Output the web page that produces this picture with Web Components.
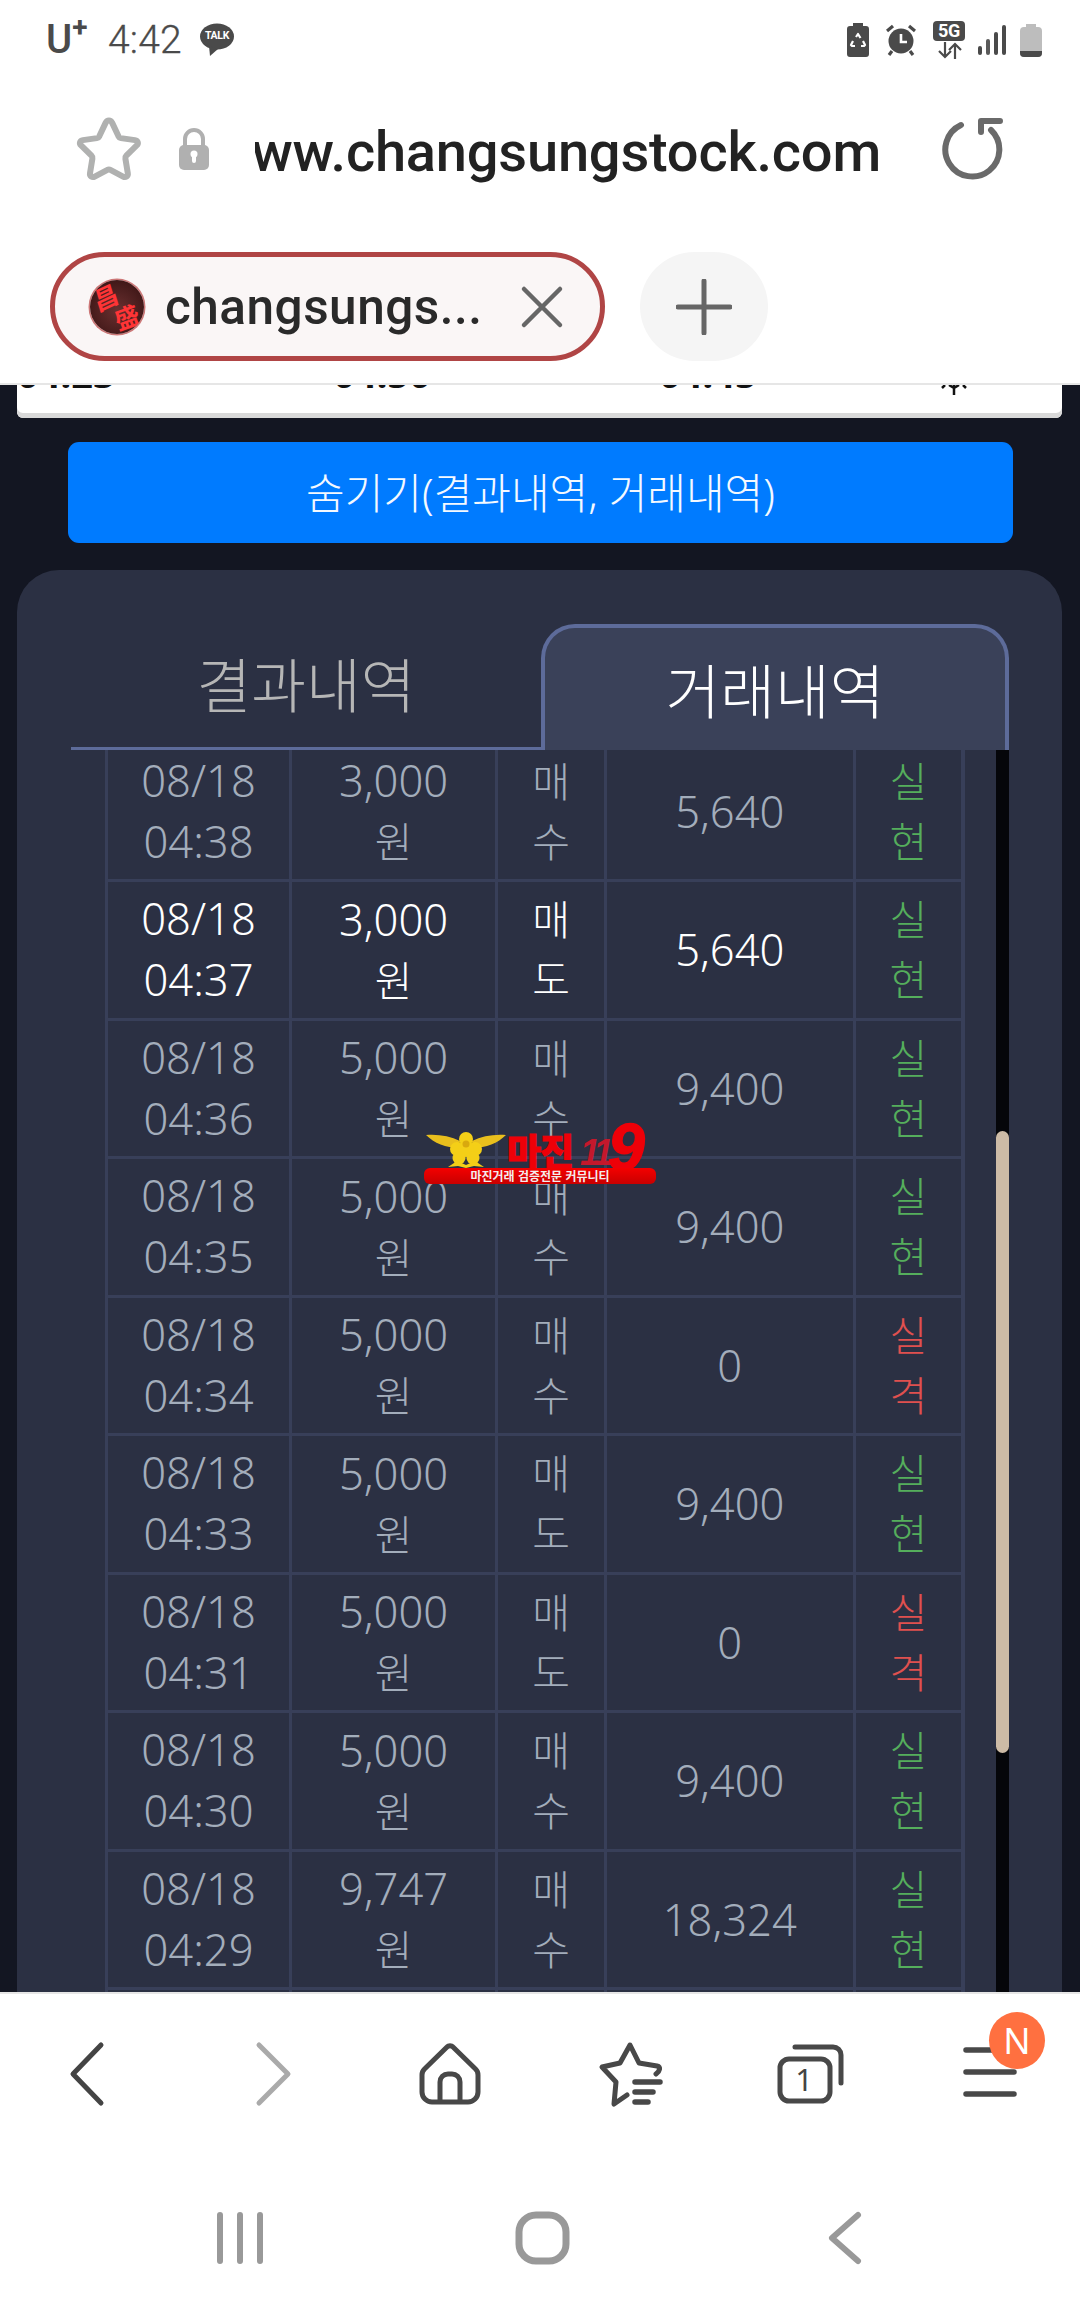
<!DOCTYPE html>
<html lang="ko"><head><meta charset="utf-8"><title>changsungstock</title>
<style>
html,body{margin:0;padding:0;background:#fff}
body{font-family:"Noto Sans","Noto Sans CJK KR",sans-serif}
</style></head><body>
<app-page>
  <status-bar></status-bar>
  <url-bar url="www.changsungstock.com"></url-bar>
  <tab-strip title-text="changsungs..."></tab-strip>
  <main-area>
    <clock-card></clock-card>
    <hide-button>숨기기(결과내역, 거래내역)</hide-button>
    <result-panel>
      <trade-row date="08/18" time="04:38" amt="3,000" side="매수" val="5,640" res="실현"></trade-row>
      <trade-row date="08/18" time="04:37" amt="3,000" side="매도" val="5,640" res="실현" hi></trade-row>
      <trade-row date="08/18" time="04:36" amt="5,000" side="매수" val="9,400" res="실현"></trade-row>
      <trade-row date="08/18" time="04:35" amt="5,000" side="매수" val="9,400" res="실현"></trade-row>
      <trade-row date="08/18" time="04:34" amt="5,000" side="매수" val="0" res="실격"></trade-row>
      <trade-row date="08/18" time="04:33" amt="5,000" side="매도" val="9,400" res="실현"></trade-row>
      <trade-row date="08/18" time="04:31" amt="5,000" side="매도" val="0" res="실격"></trade-row>
      <trade-row date="08/18" time="04:30" amt="5,000" side="매수" val="9,400" res="실현"></trade-row>
      <trade-row date="08/18" time="04:29" amt="9,747" side="매수" val="18,324" res="실현"></trade-row>
      <trade-row date="" time="" amt="" side="" val="" res=""></trade-row>
    </result-panel>
  </main-area>
  <tool-bar></tool-bar>
  <sys-nav></sys-nav>
  <margin-badge></margin-badge>
</app-page>
<script>
function def(name,html){
  customElements.define(name,class extends HTMLElement{
    connectedCallback(){
      if(this.shadowRoot)return;
      const r=this.attachShadow({mode:'open'});
      r.innerHTML=typeof html==='function'?html(this):html;
    }
  });
}
const KR='"Noto Sans","Noto Sans CJK KR",sans-serif';
def('app-page',`<style>:host{display:flex;flex-direction:column;width:1080px;height:2316px;overflow:hidden;position:relative;background:#fff}</style><slot></slot>`);

def('status-bar',`<style>
:host{display:flex;align-items:center;height:78px;padding:2px 38px 0 46px;box-sizing:border-box;color:#4a4a4a;font-family:Roboto,sans-serif;flex:none}
.u{font-size:40px;font-weight:500;line-height:38px;display:flex;width:62px}
.u sup{font-size:28px;font-weight:700;line-height:20px;margin:-3px 0 0 0;height:20px;display:block}
.t{font-size:39px;line-height:40px;font-weight:300;width:92px;letter-spacing:.2px;-webkit-text-stroke:.3px #4a4a4a}
.talk{position:relative;width:34px;height:34px;display:block}
.talk b{position:absolute;left:0;right:0;top:7px;text-align:center;font-size:10.5px;line-height:12px;color:#fff;font-weight:700;letter-spacing:-.3px}
.sp{flex:1}
.r{display:flex;align-items:center}
svg{display:block}
.g{position:relative;width:32px;height:38px;margin:0 13px 0 17px}
.g b{position:absolute;left:0;top:0;width:32px;height:20px;background:#4a4a4a;border-radius:4px;color:#fff;font-size:18px;line-height:20px;text-align:center;font-weight:700;letter-spacing:-.2px}
.g svg{position:absolute;left:4px;top:21px}
</style>
<span class="u">U<sup>+</sup></span><span class="t">4:42</span>
<span class="talk"><svg width="34" height="34" viewBox="0 0 34 34"><ellipse cx="17" cy="13.5" rx="17" ry="13" fill="#4a4a4a"/><path d="M9 23l1 10 8-7z" fill="#4a4a4a"/></svg><b>TALK</b></span>
<span class="sp"></span>
<span class="r">
<svg width="24" height="34" viewBox="0 0 24 34" style="margin-right:16px"><path d="M7 0h10v3h3a3 3 0 0 1 3 3v25a3 3 0 0 1-3 3H4a3 3 0 0 1-3-3V6a3 3 0 0 1 3-3h3z" fill="#4a4a4a"/><path d="M10 14l2-3 2.500 4M17 18l2 4-1 1h-3M9 23H6l-1-1 2-4" stroke="#fff" stroke-width="2.200" fill="none" stroke-linejoin="round"/></svg>
<svg width="30" height="32" viewBox="0 0 30 32"><circle cx="15" cy="17" r="12.5" fill="#4a4a4a"/><path d="M1 7l6-5M29 7l-6-5M6 27l-3 4M24 27l3 4" stroke="#4a4a4a" stroke-width="3.2"/><path d="M15 10v8h6" stroke="#fff" stroke-width="2.6" fill="none"/></svg>
<span class="g"><b>5G</b><svg width="26" height="17" viewBox="0 0 26 17"><path d="M8 0v15M2 9l6 6 6-6M18 17V2M12 8l6-6 6 6" stroke="#4a4a4a" stroke-width="2.2" fill="none"/></svg></span>
<svg width="28" height="30" viewBox="0 0 28 30" style="margin-right:14px"><g fill="#4a4a4a"><rect x="0" y="21" width="4" height="9" rx="2"/><rect x="8" y="14" width="4" height="16" rx="2" fill="#5a5a5a"/><rect x="16" y="7" width="4" height="23" rx="2"/><rect x="24" y="0" width="4" height="30" rx="2"/></g></svg>
<svg width="22" height="33" viewBox="0 0 22 33"><path d="M6 0h10v3h2a4 4 0 0 1 4 4v22a4 4 0 0 1-4 4H4a4 4 0 0 1-4-4V7a4 4 0 0 1 4-4h2z" fill="#bdbdbd"/><path d="M0 27h22v2a4 4 0 0 1-4 4H4a4 4 0 0 1-4-4z" fill="#4a4a4a"/></svg>
</span>`);

def('url-bar',h=>`<style>
:host{display:flex;align-items:center;height:142px;padding:0 0 0 74px;box-sizing:border-box;flex:none}
svg{display:block;flex:none}
.u{width:626px;margin:0 59px 0 45px;display:flex;justify-content:flex-end;overflow:hidden;white-space:nowrap;font:500 56px/70px Roboto,sans-serif;color:#222;padding-top:6px;letter-spacing:-.2px}
</style>
<svg width="70" height="70" viewBox="0 0 70 70" style="margin-right:34px"><path d="M35 6.5c1.5 0 2.5 1 3.2 2.4l6.3 13.4c.5 1 1.2 1.6 2.4 1.8l14 2c3 .5 4 3.200 1.800 5.300l-10.400 10.300c-.8.8-1.100 1.800-.9 2.900l2.400 14.600c.5 3-2.200 4.700-4.700 3.400l-12.700-6.700c-1-.6-2-.6-3 0l-12.700 6.700c-2.500 1.300-5.200-.4-4.700-3.400l2.400-14.600c.2-1.100-.1-2.100-.9-2.900l-10.400-10.300c-2.200-2.100-1.200-4.800 1.800-5.300l14-2c1.200-.2 1.900-.8 2.400-1.800l6.300-13.400c.7-1.400 1.700-2.400 3.200-2.400z" fill="none" stroke="#b0b1b0" stroke-width="6" stroke-linejoin="round"/></svg>
<svg width="32" height="42" viewBox="0 0 32 42"><path d="M7 19v-8a9 9 0 0 1 18 0v8" fill="none" stroke="#b0b0b0" stroke-width="4"/><rect x="1" y="17" width="30" height="25" rx="5" fill="#b0b0b0"/><path d="M16 25v8" stroke="#fff" stroke-width="4" stroke-linecap="round"/><circle cx="16" cy="26" r="3.500" fill="#fff"/></svg>
<div class="u"><span>${h.getAttribute('url')}</span></div>
<svg width="64" height="64" viewBox="0 0 64 64"><path d="M21 8A27 27 0 1 0 51 13M41 4H60M41 4V15" fill="none" stroke="#6a6a6a" stroke-width="6" stroke-linecap="round"/></svg>`);

def('tab-strip',h=>`<style>
:host{display:flex;align-items:flex-start;height:163px;padding:32px 0 0 50px;box-sizing:border-box;gap:35px;flex:none}
.tab{width:555px;height:109px;box-sizing:border-box;border:5px solid #b04545;border-radius:55px;background:#faf6f6;display:flex;align-items:center;padding-left:35px}
.fav{width:54px;height:54px;border-radius:50%;flex:none;background:radial-gradient(circle at 50% 55%,#6a3030,#3a1414 85%);box-shadow:0 0 0 1.5px #c77;position:relative;overflow:hidden;color:#ff3436;font:700 25px/26px "Noto Sans CJK SC",sans-serif}
.fav i{position:absolute;font-style:normal}
.tt{font:500 49.5px/60px Roboto,sans-serif;color:#2a2a2a;margin-left:21px;width:340px;white-space:nowrap;letter-spacing:.5px}
.x{flex:none;margin-left:15px}
.plus{width:128px;height:109px;border-radius:55px;background:#f5f5f5;display:flex;align-items:center;justify-content:center}
svg{display:block}
</style>
<div class="tab"><div class="fav"><i style="left:3px;top:3px;transform:rotate(-25deg) skewX(-8deg)">昌</i><i style="left:24px;top:23px;transform:rotate(-20deg)">盛</i></div><div class="tt">${h.getAttribute('title-text')}</div>
<svg class="x" width="44" height="44" viewBox="0 0 44 44"><path d="M4 4l36 36M40 4L4 40" stroke="#666" stroke-width="4.500" stroke-linecap="round"/></svg></div>
<div class="plus"><svg width="56" height="56" viewBox="0 0 56 56"><path d="M2 28h52M28 2v52" stroke="#666" stroke-width="5" stroke-linecap="round"/></svg></div>`);

def('main-area',`<style>:host{display:flex;flex-direction:column;flex:1;min-height:0;overflow:hidden;background:#131622;border-top:2px solid #e6e6e6;border-bottom:2px solid #e6e6e6;padding:0 18px 0 17px}</style><slot></slot>`);

def('clock-card',`<style>
:host{display:block;height:33px;flex:none;overflow:hidden;background:#fff;border-radius:0 0 6px 6px;box-shadow:inset 0 -5px 0 #d9d9d9}
.r{display:grid;grid-template-columns:88px 554px 94px 93px 216px;margin-top:-32px;font:700 38px/40px "Noto Sans",sans-serif;color:#111;height:40px}
.r span{text-align:center;white-space:nowrap}
.i{display:flex;justify-content:center}
svg{display:block;margin-top:32px}
</style>
<div class="r"><span>04:23</span><span>04:50</span><span>04:45</span><i></i><div class="i"><svg width="36" height="10" viewBox="0 0 36 10"><path d="M18 0v10M9 0l-3 3M27 0l3 3M13 0l5 3 5-3" stroke="#111" stroke-width="2.500" fill="none"/></svg></div></div>`);

def('hide-button',`<style>
:host{display:flex;align-items:center;justify-content:center;flex:none;height:101px;margin:24px 49px 27px 51px;background:#007bff;border-radius:11px;color:#f4f9ff;font:300 42px/1 ${KR}}
</style><slot></slot>`);

def('result-panel',`<style>
:host{display:flex;flex-direction:column;flex:1;min-height:0;background:#2b3043;border-radius:42px 42px 0 0;padding:54px 53px 0 54px}
.tabs{display:flex;height:126px;flex:none;font:300 59.5px/1 ${KR}}
.a{width:470px;box-sizing:border-box;border-bottom:3px solid #5d6b9a;color:#b6b6b6;display:flex;align-items:center;justify-content:center;padding:0 0 2px 0}
.b{flex:1;box-sizing:border-box;border:4px solid #5d6b9a;border-bottom:0;border-radius:34px 34px 0 0;background:#3a4159;color:#fff;display:flex;align-items:center;justify-content:center;padding-top:3px}
.body{display:flex;flex:1;min-height:0;overflow:hidden}
.tbl{margin:-6.5px 0 0 34px;width:860px;flex:none}
.sp{flex:1}
.track{width:13px;background:#05060a;flex:none}
.thumb{width:13px;height:622px;margin-top:381px;background:#cdbba6;border-radius:7px}
</style>
<div class="tabs"><div class="a">결과내역</div><div class="b">거래내역</div></div>
<div class="body"><div class="tbl"><slot></slot></div><div class="sp"></div><div class="track"><div class="thumb"></div></div></div>`);

def('trade-row',h=>{
 const g=k=>h.getAttribute(k)||'';
 const s=g('side'),r=g('res');
 const fc=h.hasAttribute('hi')?'#fff':'#a3adbb';
 const rc=r==='실격'?'#e0504f':'#55ae5c';
 return `<style>
:host{display:block;height:138.5px;box-sizing:border-box;background:#383f59;padding:0 4px 3px 3px;color:${fc};font:300 41px/60px ${KR}}
.g{display:grid;grid-template-columns:181px 203px 106px 245.5px 105.5px;column-gap:3px;height:100%}
.c{background:#2b3043;display:flex;align-items:center;justify-content:center;text-align:center;padding-bottom:1px;box-sizing:border-box}
.d{font-size:43.5px}
.res{color:${rc}}
</style><div class="g"><div class="c"><div><span class="d">${g('date')}</span><br><span class="d">${g('time')}</span></div></div><div class="c"><div><span class="d">${g('amt')}</span><br>${g('amt')?'원':''}</div></div><div class="c"><div>${s[0]||''}<br>${s[1]||''}</div></div><div class="c"><div class="d">${g('val')}</div></div><div class="c res"><div>${r[0]||''}<br>${r[1]||''}</div></div></div>`;
});

def('tool-bar',`<style>
:host{display:grid;grid-template-columns:repeat(6,180px);height:160px;flex:none;align-items:center;justify-items:center}
svg{display:block;overflow:visible}
.m{position:relative;width:70px;height:70px}
.n{position:absolute;left:34px;top:-27px;width:56px;height:57px;border-radius:50%;background:#ff7040;color:#fff;font:400 36px/57px "Noto Sans",sans-serif;text-align:center}
text{font:400 31px "Noto Sans",sans-serif;fill:#444}
</style>
<svg width="70" height="70" viewBox="0 0 70 70"><path d="M46 6L18 35l28 29" fill="none" stroke="#444" stroke-width="5" stroke-linecap="round" stroke-linejoin="round"/></svg>
<svg width="70" height="70" viewBox="0 0 70 70"><path d="M24 6l29 29-29 29" fill="none" stroke="#aaa" stroke-width="5" stroke-linecap="round" stroke-linejoin="round"/></svg>
<svg width="64" height="64" viewBox="0 0 64 64"><path d="M14 60H50a10 10 0 0 0 10-10V33a8 8 0 0 0-2.500-6L35 5a4 4 0 0 0-6 0L6.500 27a8 8 0 0 0-2.500 6V50a10 10 0 0 0 10 10zM22 60V40a8 8 0 0 1 8-8h4a8 8 0 0 1 8 8V60" fill="none" stroke="#484848" stroke-width="5" stroke-linejoin="round"/></svg>
<svg width="70" height="70" viewBox="0 0 70 70"><path d="M32 56L19 65l2-22L7 28l18-4L35 6l9 18 18 3c4 1 3 5-1 8" fill="none" stroke="#484848" stroke-width="5" stroke-linecap="round" stroke-linejoin="round"/><path d="M40 43h25M40 53h18M40 63h13" stroke="#484848" stroke-width="5.500" stroke-linecap="round"/></svg>
<svg width="70" height="70" viewBox="0 0 70 70"><rect x="5" y="20" width="50" height="42" rx="9" fill="none" stroke="#484848" stroke-width="5"/><path d="M20 8H58a8 8 0 0 1 8 8V44" fill="none" stroke="#484848" stroke-width="5" stroke-linecap="round"/><text x="29" y="52" text-anchor="middle">1</text></svg>
<div class="m"><svg width="70" height="70" viewBox="0 0 70 70"><path d="M11 11h48M11 33h48M11 55h48" stroke="#484848" stroke-width="5.500" stroke-linecap="round"/></svg><div class="n">N</div></div>`);

def('sys-nav',`<style>
:host{display:grid;grid-template-columns:repeat(3,302px);padding:6px 0 0 89px;height:162px;box-sizing:border-box;flex:none;align-items:center;justify-items:center}
svg{display:block}
</style>
<svg width="60" height="60" viewBox="0 0 60 60"><path d="M10 7v46M30 7v46M50 7v46" stroke="#999" stroke-width="6" stroke-linecap="round"/></svg>
<svg width="60" height="60" viewBox="0 0 60 60"><rect x="7" y="7" width="47" height="46" rx="17" fill="none" stroke="#999" stroke-width="7"/></svg>
<svg width="60" height="60" viewBox="0 0 60 60"><path d="M44 7L18 30l26 23" fill="none" stroke="#999" stroke-width="6" stroke-linecap="round" stroke-linejoin="round"/></svg>`);

def('margin-badge',`<style>
:host{position:absolute;left:424px;top:1130px;width:234px;height:56px;display:block}
svg{position:absolute;left:2px;top:1px}
.m{position:absolute;left:83px;top:1px;font:900 37px/38px "Noto Sans CJK KR",sans-serif;color:#ee0008;letter-spacing:-1px;-webkit-text-stroke:1px #ee0008}
.n{position:absolute;left:156px;top:5px;font:italic 700 36px/36px "Liberation Sans",sans-serif;color:#c4182c;letter-spacing:-4px}
.nine{position:absolute;left:184px;top:-14px;font:italic 700 66px/62px "Liberation Sans",sans-serif;color:#ee0008;-webkit-text-stroke:1.5px #ee0008}
.bar{position:absolute;left:0;right:2px;top:38px;height:16px;border-radius:6px;background:linear-gradient(#f40000,#c80000);color:#f5ecec;font:700 12px/16px "Noto Sans CJK KR",sans-serif;text-align:center;white-space:nowrap}
</style>
<svg width="80" height="38" viewBox="0 0 80 38"><path d="M0 4C12 3 24 5 34 10L33 17C20 17 8 12 0 4zM80 4C68 3 56 5 46 10L47 17C60 17 72 12 80 4z" fill="#e9bf1d"/><g fill="#f4cf17"><circle cx="40" cy="8" r="7"/><circle cx="31" cy="18" r="7"/><circle cx="49" cy="18" r="7"/><circle cx="40" cy="18" r="8"/><circle cx="33" cy="27" r="6.500"/><circle cx="47" cy="27" r="6.500"/><path d="M22 36l9-6 9 4 9-4 9 6-10-1-8 2-8-2z"/></g><circle cx="40" cy="13" r="3.500" fill="#d9a90e"/></svg>
<div class="m">마진</div><div class="n">11</div><div class="nine">9</div>
<div class="bar">마진거래 검증전문 커뮤니티</div>`);
</script>
</body></html>
